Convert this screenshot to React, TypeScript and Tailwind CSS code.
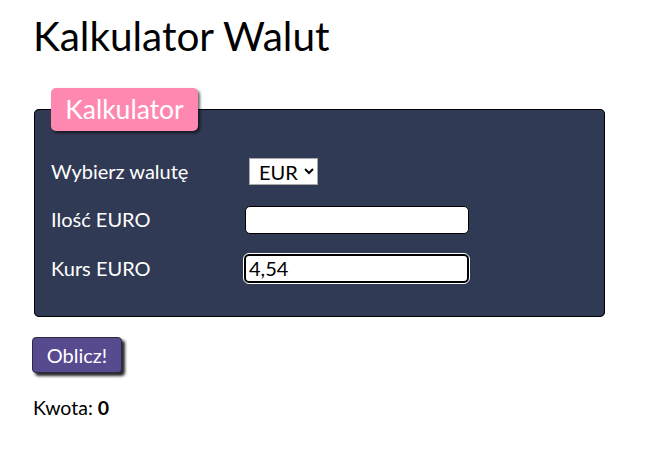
export default function App() {
  return (
    <div className="min-h-[460px] bg-white px-[33px] font-['Lato',sans-serif] text-black">
      <h1 className="pt-3 text-[40.5px] font-normal leading-[1.2]">Kalkulator Walut</h1>

      <fieldset className="mt-[27px] ml-px w-[571px] rounded-[5px] border border-black bg-[#313a54] px-4 pb-[33px] pt-[27px]">
        <legend className="p-0">
          <span className="block h-[43px] w-[147px] rounded-[5px] bg-[#ff88b1] text-center text-[26.5px] leading-[43px] text-white shadow-[2px_2px_3px_rgba(0,0,0,0.6)]">
            Kalkulator
          </span>
        </legend>

        <div className="grid grid-cols-[194px_1fr] items-center gap-y-5 text-[20px] leading-6 text-white">
          <label>Wybierz walutę</label>
          <div>
            <select className="ml-1 h-[27px] w-[69px] border border-[#a9a9a9] bg-white pl-[5px] text-[20px] leading-6 text-black">
              <option>EUR</option>
            </select>
          </div>

          <label>Ilość EURO</label>
          <input className="mt-px h-[28px] w-[224px] rounded-[5px] border border-black bg-white px-1 text-[20px] text-black" />

          <label>Kurs EURO</label>
          <input
            defaultValue="4,54"
            className="h-[29px] w-[225px] -ml-px rounded-[5px] border-2 border-black bg-white px-[3px] text-[20px] text-black outline outline-1 outline-white"
          />
        </div>
      </fieldset>

      <button className="mt-[20px] -ml-px h-[36px] w-[90px] rounded-[4px] border border-[#2e2a40] bg-[#574a8f] text-[20px] leading-6 text-white shadow-[3px_3px_3px_rgba(0,0,0,0.85)]">
        Oblicz!
      </button>

      <p className="mt-[23px] text-[19.5px] leading-6">
        Kwota: <b>0</b>
      </p>
    </div>
  );
}
